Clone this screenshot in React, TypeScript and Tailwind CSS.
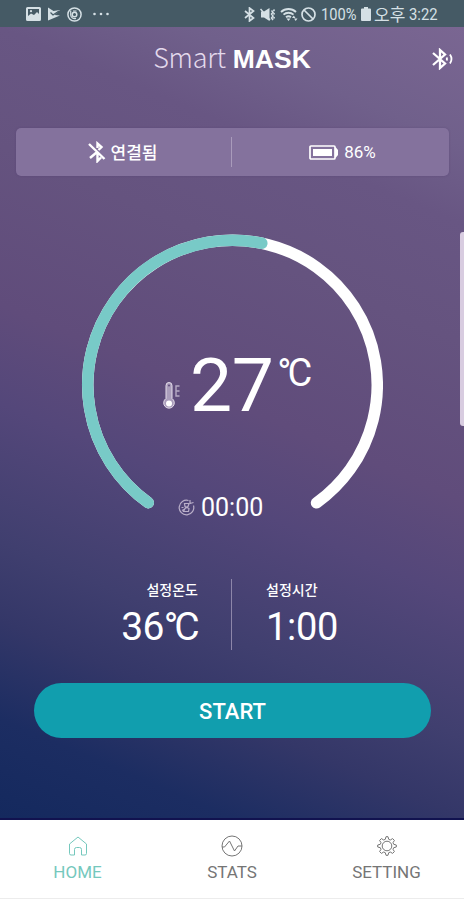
import React from "react";

const GAUGE_RADIUS = 144.75;
const GAUGE_LENGTH = 2 * Math.PI * GAUGE_RADIUS;

// Arc opens at the bottom, the sweep starts at the lower left end
const GAUGE_START = 125.6;
const GAUGE_SWEEP = 288.8;

const toDash = (degrees: number) => `${(degrees / 360) * GAUGE_LENGTH} ${GAUGE_LENGTH}`;

interface NavItem {
  name: string;
  active?: boolean;
  icon: React.ReactNode;
}

const navigation: NavItem[] = [
  {
    name: "HOME",
    active: true,
    icon: (
      <svg className="h-[22px] w-[22px]" fill="none" stroke="currentColor" viewBox="0 0 22 22">
        <path
          strokeLinejoin="round"
          d="M2.500 9 11 2l8.500 7v9.500a1.500 1.500 0 0 1-1.500 1.500h-3.500v-5.500a2 2 0 0 0-2-2h-3a2 2 0 0 0-2 2V20H4a1.500 1.500 0 0 1-1.500-1.500z"
        />
      </svg>
    ),
  },
  {
    name: "STATS",
    icon: (
      <svg className="h-[22px] w-[22px]" fill="none" stroke="currentColor" viewBox="0 0 22 22">
        <circle cx="11" cy="11" r="10" />
        <path strokeLinejoin="round" d="M1 12h2.500L8.500 6l5 10 3.500-5h4" />
      </svg>
    ),
  },
  {
    name: "SETTING",
    icon: (
      <svg className="h-[22px] w-[22px]" fill="none" stroke="currentColor" viewBox="0 0 22 22">
        <circle cx="11" cy="11" r="4.800" />
        <path
          strokeLinejoin="round"
          d="M10 1.700h2l.7 2.600 1.600.7 2.300-1.400 1.800 1.800L17 7.700l.7 1.600 2.600.7v2l-2.600.7-.7 1.600 1.400 2.300-1.800 1.800-2.300-1.400-1.600.7-.7 2.600h-2l-.7-2.600-1.600-.7-2.300 1.400-1.800-1.800L5 14.300l-.7-1.600-2.600-.7v-2l2.600-.7L5 7.700 3.600 5.400l1.800-1.800L7.700 5l1.600-.7z"
        />
      </svg>
    ),
  },
];

function StatusBar() {
  return (
    <div className="flex h-[27px] shrink-0 items-center bg-[#455a65] pt-px pr-[27px] pl-[26px] text-[17px] text-[#d5e0e5]">
      <svg className="h-[14px] w-[15px]" viewBox="0 0 15 14">
        <path
          fill="currentColor"
          fillRule="evenodd"
          d="M1.500 0h12A1.500 1.500 0 0 1 15 1.500v11a1.500 1.500 0 0 1-1.500 1.500h-12A1.500 1.500 0 0 1 0 12.500v-11A1.500 1.500 0 0 1 1.500 0zM2 2v7l3-2.500 3 1.500 3-3 2 2V2z"
        />
        <circle cx="5" cy="4.200" r="1.100" fill="currentColor" />
      </svg>
      <svg className="ml-[7px] h-[14px] w-[12px]" viewBox="0 0 12 14">
        <path fill="currentColor" d="M0 .5 5.500 4 12 3 6.500 8 12 8.500 0 13.500z" />
        <path fill="none" stroke="#455a65" strokeWidth="1.300" d="m2.500 5.500 2.500 2.500 6-4" />
      </svg>
      <svg
        className="ml-[7px] h-[15px] w-[15px]"
        fill="none"
        stroke="currentColor"
        strokeWidth="1.500"
        viewBox="0 0 15 15"
      >
        <circle cx="7.500" cy="7.500" r="6.600" />
        <circle cx="7.500" cy="7.500" r="2.300" />
        <path strokeWidth="1.200" d="M3.700 3.500v4.500a4 4 0 0 0 5.300 3.400M6 4h3.500" />
      </svg>
      <svg className="ml-[11px] h-1 w-4" fill="currentColor" viewBox="0 0 16 4">
        <circle cx="1.500" cy="2" r="1.300" />
        <circle cx="8" cy="2" r="1.300" />
        <circle cx="14.500" cy="2" r="1.300" />
      </svg>

      <svg
        className="ml-auto h-[15px] w-[11px]"
        fill="none"
        stroke="currentColor"
        strokeWidth="1.700"
        viewBox="0 0 11 15"
      >
        <path d="m1 4 8.500 7-4 3V1l4 3L1 11" />
      </svg>
      <svg className="ml-[5px] h-[15px] w-[16px]" viewBox="0 0 16 15">
        <path fill="currentColor" d="M1 4.500h3l5.500-3.500v13L4 10.500H1z" />
        <path
          fill="none"
          stroke="currentColor"
          strokeWidth="1.500"
          d="m.5 2 9.500 11M11.500 3.500l1.500 1.800-1.500 1.800L13 9l-1.500 2 1.500 2M14.500 2.500 13.500 4M14.500 6l-1 1.500M14.500 10l-1 1.500"
        />
      </svg>
      <svg className="ml-1 h-[15px] w-[18px]" viewBox="0 0 18 15">
        <path
          fill="none"
          stroke="currentColor"
          strokeWidth="1.900"
          d="M1 5a11 11 0 0 1 15 0M3.500 7.600a7.500 7.500 0 0 1 10 0M6 10.200a4 4 0 0 1 5 0"
        />
        <path fill="currentColor" d="M6.500 11.500h4l-2 2.500zM12 11l1.800-2.500 1.700 2.500zM14 11.500h3.500L15.700 14z" />
      </svg>
      <svg
        className="ml-[3px] h-[15px] w-[15px]"
        fill="none"
        stroke="currentColor"
        strokeWidth="1.700"
        viewBox="0 0 15 15"
      >
        <circle cx="7.500" cy="7.500" r="6.500" />
        <path d="m3 3 9 9" />
      </svg>
      <span className="ml-[5px] w-[36px] origin-left scale-x-[0.86] whitespace-nowrap pt-px">100%</span>
      <svg className="ml-[4px] h-[14px] w-[10px]" fill="currentColor" viewBox="0 0 10 14">
        <path d="M3 0h4v1.500h2a1 1 0 0 1 1 1V13a1 1 0 0 1-1 1H1a1 1 0 0 1-1-1V2.500a1 1 0 0 1 1-1h2z" />
      </svg>
      <span className="ml-[3px] w-[31px] whitespace-nowrap pt-[3px]">오후</span>
      <span className="ml-[4px] w-[28px] origin-left scale-x-[0.87] whitespace-nowrap pt-px">3:22</span>
    </div>
  );
}

function Header() {
  return (
    <header className="grid h-[64px] grid-cols-[1fr_auto_1fr] items-center px-[11px]">
      <span />
      <h1 className="flex items-baseline gap-[7px] pb-[2px] leading-none">
        <span className="font-['Noto_Sans_CJK_KR'] text-[27px] leading-none font-light tracking-[-0.3px] text-[#e3d9ec]">
          Smart
        </span>
        <span className="font-['Liberation_Sans'] text-[26.5px] leading-none font-bold">MASK</span>
      </h1>
      <svg
        className="h-[22px] w-[21px] justify-self-end"
        fill="none"
        stroke="currentColor"
        strokeWidth="2.300"
        viewBox="0 0 21 22"
      >
        <path d="m1 5 12 10.500-5 4.500V2l5 4.500L1 17" />
        <path strokeWidth="1.800" d="M14.500 9.500q1 1.500 0 3M18 6.500q3 4.500 0 9" />
      </svg>
    </header>
  );
}

function DeviceStatus() {
  return (
    <section className="mr-[15px] ml-4 mt-[37px] flex h-[48px] items-center rounded-[5px] bg-[#84729d] text-[17px] shadow-[0_0_2px_rgba(70,50,100,0.35)]">
      <div className="flex w-[215px] items-center justify-center gap-[5px] pr-[2px]">
        <svg
          className="h-[22px] w-[18px]"
          fill="none"
          stroke="currentColor"
          strokeWidth="2.400"
          viewBox="0 0 18 22"
        >
          <path d="m1 3 15.500 15M9.500 7V2.500L13.500 6l-3 3M2 17l6.500-5.500M9.500 12v8l3.500-3.500" />
        </svg>
        <span className="pt-[3px] font-medium">연결됨</span>
      </div>
      <div className="h-[30px] w-px bg-[#a99bbb]" />
      <div className="flex flex-1 items-center justify-center gap-[6px] pl-[4px]">
        <svg className="h-[15px] w-[29px]" viewBox="0 0 29 15">
          <rect
            x="1"
            y="1"
            width="25"
            height="13"
            rx="1"
            fill="none"
            stroke="currentColor"
            strokeWidth="1.700"
          />
          <rect x="4" y="4" width="19" height="7" fill="currentColor" />
          <path fill="currentColor" d="M26 2.500h1L29 5v5l-2 2.500h-1z" />
        </svg>
        <span className="pt-[2px]">86%</span>
      </div>
    </section>
  );
}

function Gauge() {
  return (
    <section className="relative mt-[58px] h-[302px] w-[302px] self-center">
      <svg className="h-full w-full" fill="none" strokeWidth="11.500" strokeLinecap="round" viewBox="0 0 302 302">
        <g transform={`rotate(${GAUGE_START} 151.500 151)`}>
          <circle
            cx="151.500"
            cy="151"
            r={GAUGE_RADIUS}
            stroke="#ffffff"
            strokeDasharray={toDash(GAUGE_SWEEP)}
          />
          <circle
            cx="151.500"
            cy="151"
            r={GAUGE_RADIUS}
            stroke="#78cac7"
            strokeDasharray={toDash(156)}
          />
        </g>
      </svg>

      <div className="absolute inset-0 flex flex-col">
        <div className="mt-[114px] ml-[82px] flex h-[75px] items-start">
          <svg className="mt-[34px] h-[28px] w-[18px]" viewBox="0 0 18 28">
            <path
              fill="#aa9dbb"
              stroke="#e4dcea"
              strokeWidth="1"
              d="M3 3.500a3 3 0 0 1 6 0v13a5.300 5.300 0 1 1-6 0z"
            />
            <circle cx="6" cy="21.500" r="3" fill="#ffffff" />
            <circle cx="6" cy="3.500" r="1" fill="#5f4b7b" />
            <path fill="none" stroke="#b5a9c4" strokeWidth="1.400" d="M16.500 4H13v10h3.500M13 9h3.500" />
          </svg>
          <span className="ml-[9px] text-[75px] leading-[75px] tracking-[-0.5px]">27</span>
          <span className="mt-[6px] ml-[4px] text-[38px] leading-[38px] tracking-[-4px]">°C</span>
        </div>
        <div className="mt-[69px] ml-[97px] flex h-[30px] items-center gap-[6px]">
          <svg
            className="h-[17px] w-[17px] text-[#b9aec8]"
            fill="none"
            stroke="currentColor"
            strokeWidth="1.200"
            viewBox="0 0 17 17"
          >
            <path d="M10.500 1.500A7.300 7.300 0 1 0 15.500 6.500M12 1v3.500l3.500-1" />
            <path d="M6.500 4.500H11L10 7.500 7 9.500 5.500 12.500h5l.5-3-4-2zM3.500 8.500h2M4 11.500l2-1" />
          </svg>
          <span className="pt-px text-[25px] leading-[30px]">00:00</span>
        </div>
      </div>
    </section>
  );
}

function Targets() {
  return (
    <section className="mt-[43px] flex h-[71px]">
      <div className="flex flex-1 flex-col items-end pr-[33px]">
        <span className="mt-[2px] text-[14px] leading-[18px] font-medium">설정온도</span>
        <span className="mt-[5px] text-[39px] leading-[46px] tracking-[-0.7px]">
          36<span className="tracking-[-4px]">°</span>
          <span className="-mr-[1px]">C</span>
        </span>
      </div>
      <div className="w-px bg-[#8d86a9]" />
      <div className="flex flex-1 flex-col pl-[34px]">
        <span className="mt-[2px] text-[14px] leading-[18px] font-medium">설정시간</span>
        <span className="mt-[5px] text-[38px] leading-[46px] tracking-[-0.3px]">1:00</span>
      </div>
    </section>
  );
}

export default function App() {
  return (
    <div className="flex h-[900px] w-[464px] flex-col overflow-hidden bg-white font-[Roboto,'Noto_Sans_CJK_KR',sans-serif] text-white">
      <StatusBar />

      <main className="relative flex h-[793px] shrink-0 flex-col border-b-2 border-[#11124f] bg-[linear-gradient(23deg,#14295e_0%,#1c2d62_10%,#343768_20%,#403f6f_28%,#54477a_42%,#604c7b_52%,#65537f_68%,#685683_80%,#70608b_88%,#7a6692_100%)]">
        <Header />
        <DeviceStatus />
        <Gauge />
        <Targets />
        <button className="mr-[33px] ml-[34px] mt-[33px] h-[55px] rounded-full bg-[#119eae] pt-[2px] text-[22px] font-medium">
          START
        </button>

        {/* Edge panel handle */}
        <div className="absolute top-[205px] right-0 h-[194px] w-[4px] rounded-l-[3px] bg-[#d8cce0]" />
      </main>

      <nav className="grid h-[79px] grid-cols-[155px_154px_155px] border-b border-[#ececec] bg-white">
        {navigation.map((item) => (
          <a
            key={item.name}
            className={`flex flex-col items-center pt-[15px] ${item.active ? "text-[#75c8bd]" : "text-[#757575]"}`}
          >
            {item.icon}
            <span className="mt-[4px] text-[17px] leading-[22px]">{item.name}</span>
          </a>
        ))}
      </nav>
    </div>
  );
}
